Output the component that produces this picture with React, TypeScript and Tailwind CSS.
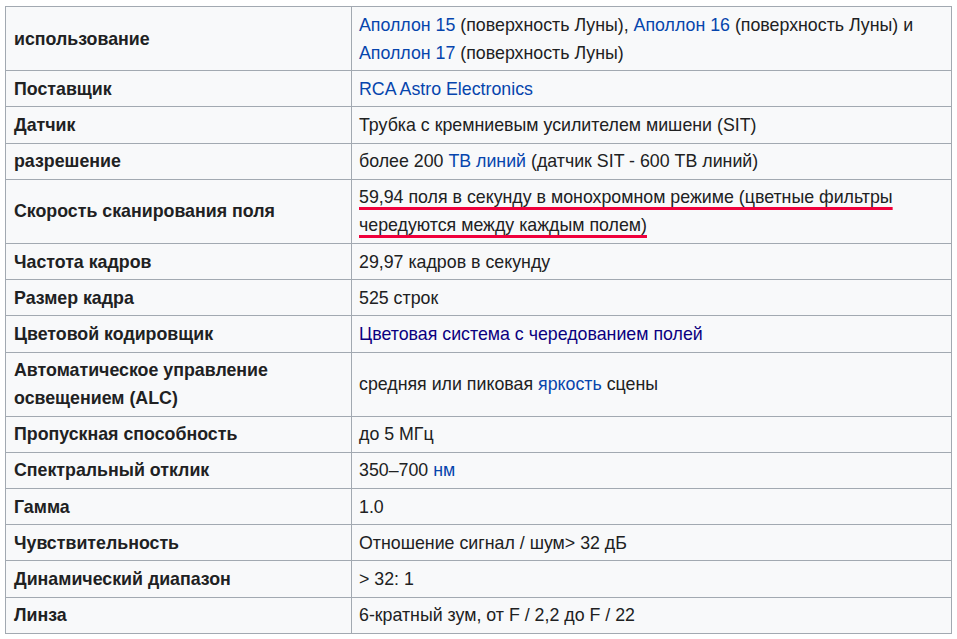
import React from "react";

const L = ({ children, v }: { children: React.ReactNode; v?: boolean }) => (
  <a className={v ? "text-[#0b0080]" : "text-[#0645ad]"}>{children}</a>
);

const rows: [React.ReactNode, React.ReactNode][] = [
  [
    "использование",
    <>
      <L>Аполлон 15</L> (поверхность Луны), <L>Аполлон 16</L> (поверхность Луны) и
      <br />
      <L>Аполлон 17</L> (поверхность Луны)
    </>,
  ],
  ["Поставщик", <L>RCA Astro Electronics</L>],
  ["Датчик", "Трубка с кремниевым усилителем мишени (SIT)"],
  [
    "разрешение",
    <>
      более 200 <L>ТВ линий</L> (датчик SIT - 600 ТВ линий)
    </>,
  ],
  [
    "Скорость сканирования поля",
    <span className="underline decoration-[#f0003c] decoration-[3px] underline-offset-[4px] [text-decoration-skip-ink:none]">
      59,94 поля в секунду в монохромном режиме (цветные фильтры
      <br />
      чередуются между каждым полем)
    </span>,
  ],
  ["Частота кадров", "29,97 кадров в секунду"],
  ["Размер кадра", "525 строк"],
  ["Цветовой кодировщик", <L v>Цветовая система с чередованием полей</L>],
  [
    <>
      Автоматическое управление
      <br />
      освещением (ALC)
    </>,
    <>
      средняя или пиковая <L>яркость</L> сцены
    </>,
  ],
  ["Пропускная способность", "до 5 МГц"],
  [
    "Спектральный отклик",
    <>
      350–700 <L>нм</L>
    </>,
  ],
  ["Гамма", "1.0"],
  ["Чувствительность", "Отношение сигнал / шум> 32 дБ"],
  ["Динамический диапазон", "> 32: 1"],
  ["Линза", "6-кратный зум, от F / 2,2 до F / 22"],
];

export default function App() {
  return (
    <div className="min-h-[639px] w-[957px] bg-white pl-[5px] pt-[6px] font-['Liberation_Sans',Arial,sans-serif] text-[17.6px] leading-[28px] text-[#202122]">
      <table className="w-[947px] table-fixed border-collapse border border-[#a2a9b1] bg-[#f8f9fa]">
        <colgroup>
          <col className="w-[346px]" />
          <col />
        </colgroup>
        <tbody>
          {rows.map(([k, v], i) => (
            <tr key={i}>
              <td className="border border-[#a2a9b1] py-[3.6px] pl-[8px] pr-2 align-middle text-[17.8px] font-bold">{k}</td>
              <td className="border border-[#a2a9b1] py-[3.6px] pl-[7px] pr-2 align-middle text-[17.8px]">{v}</td>
            </tr>
          ))}
        </tbody>
      </table>
    </div>
  );
}
